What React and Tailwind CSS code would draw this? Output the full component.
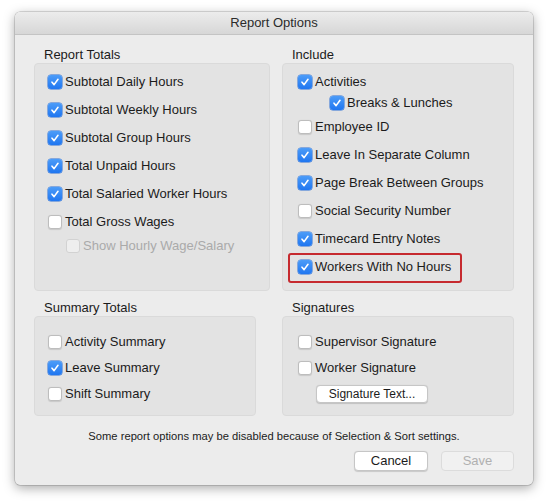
import React from 'react'

const FONT = { fontFamily: '"Liberation Sans", Arial, sans-serif' }

function Check({ on, disabled }) {
  if (on) {
    return (
      <span className="flex h-[14px] w-[14px] shrink-0 items-center justify-center rounded-[3px] bg-gradient-to-b from-[#4c9cf8] to-[#1f76f0] shadow-[0_0_0_0.5px_#2a6fd6]">
        <svg width="10" height="10" viewBox="0 0 10 10">
          <path d="M2 5.2 L4.1 7.6 L8 2.3" fill="none" stroke="#fff" strokeWidth="1.6" strokeLinecap="round" strokeLinejoin="round" />
        </svg>
      </span>
    )
  }
  return (
    <span
      className={
        disabled
          ? 'h-[14px] w-[14px] shrink-0 rounded-[3px] border border-[#d2d2d2] bg-[#eeeeee]'
          : 'h-[14px] w-[14px] shrink-0 rounded-[3px] border border-[#bdbdbd] bg-white shadow-[0_0.5px_1px_rgba(0,0,0,0.12)]'
      }
    />
  )
}

function Row({ label, on, disabled, h = 'h-[28px]', indent = '' }) {
  return (
    <div className={`flex items-center gap-[3px] ${h} ${indent}`}>
      <Check on={on} disabled={disabled} />
      <span className={disabled ? 'text-[#aaaaaa]' : 'text-[#1b1b1b]'}>{label}</span>
    </div>
  )
}

function Group({ title, children, className = '' }) {
  return (
    <div className="flex flex-col">
      <div className="h-[16px] pl-[10px] leading-[16px] text-[#1b1b1b]">{title}</div>
      <div className={`rounded-[4px] border border-[#dadada] bg-[#e3e3e3] pl-[13px] ${className}`}>
        {children}
      </div>
    </div>
  )
}

function Button({ children, disabled, w }) {
  return (
    <div
      className={`flex h-[20px] items-center justify-center rounded-[4px] border text-[13px] ${w} ${
        disabled
          ? 'border-[#dcdcdc] bg-[#f1f1f1] text-[#b0b0b0]'
          : 'border-[#c6c6c6] bg-white text-[#1b1b1b] shadow-[0_0.5px_1px_rgba(0,0,0,0.15)]'
      }`}
    >
      {children}
    </div>
  )
}

export default function App() {
  return (
    <div className="h-[502px] w-[550px] bg-white pl-[15px] pt-[12px] text-[13px]" style={FONT}>
      <div className="flex h-[473px] w-[518px] flex-col overflow-hidden rounded-[5px] bg-[#ececec] shadow-[0_3px_12px_rgba(0,0,0,0.35),0_0_0_0.5px_rgba(0,0,0,0.25)]">
        {/* Title bar */}
        <div className="flex h-[23px] items-center justify-center border-b border-[#c4c4c4] bg-gradient-to-b from-[#ececec] to-[#d7d7d7] text-[13px] text-[#2b2b2b]">
          Report Options
        </div>

        <div className="flex flex-1 flex-col px-[19px] pt-[12px]">
          <div className="grid grid-cols-[236px_232px] gap-x-[12px]">
            <Group title="Report Totals" className="h-[228px] pt-[4px]">
              <Row label="Subtotal Daily Hours" on />
              <Row label="Subtotal Weekly Hours" on />
              <Row label="Subtotal Group Hours" on />
              <Row label="Total Unpaid Hours" on />
              <Row label="Total Salaried Worker Hours" on />
              <Row label="Total Gross Wages" />
              <Row label="Show Hourly Wage/Salary" disabled h="h-[20px]" indent="ml-[18px] gap-[2px]" />
            </Group>

            <Group title="Include" className="h-[228px] pt-[4px] pl-[15px]">
              <Row label="Activities" on />
              <Row label="Breaks & Lunches" on h="h-[14px]" indent="ml-[32px]" />
              <div className="h-[3px]" />
              <Row label="Employee ID" />
              <Row label="Leave In Separate Column" on />
              <Row label="Page Break Between Groups" on />
              <Row label="Social Security Number" />
              <Row label="Timecard Entry Notes" on />
              <div className="relative">
                <Row label="Workers With No Hours" on />
                <span className="pointer-events-none absolute -left-[10px] top-0 h-[30px] w-[174px] rounded-[3px] border-2 border-[#c62a2f]" />
              </div>
            </Group>

            <div className="mt-[9px] w-[222px]">
              <Group title="Summary Totals" className="h-[100px] pt-[12px]">
                <Row label="Activity Summary" h="h-[26px]" />
                <Row label="Leave Summary" on h="h-[26px]" />
                <Row label="Shift Summary" h="h-[26px]" />
              </Group>
            </div>

            <div className="mt-[9px]">
              <Group title="Signatures" className="h-[100px] pt-[12px] pl-[15px]">
                <Row label="Supervisor Signature" h="h-[26px]" />
                <Row label="Worker Signature" h="h-[26px]" />
                <div className="ml-[18px] mt-[4px] flex h-[18px] w-[112px] items-center justify-center rounded-[4px] border border-[#c6c6c6] bg-white text-[12px] text-[#1b1b1b] shadow-[0_0.5px_1px_rgba(0,0,0,0.15)]">
                  Signature Text...
                </div>
              </Group>
            </div>
          </div>

          <div className="mt-[12px] text-center text-[11.2px] leading-[16px] text-[#1b1b1b]">
            Some report options may be disabled because of Selection &amp; Sort settings.
          </div>

          <div className="mt-[7px] flex justify-end gap-[13px]">
            <Button w="w-[74px]">Cancel</Button>
            <Button w="w-[73px]" disabled>Save</Button>
          </div>
        </div>
      </div>
    </div>
  )
}
